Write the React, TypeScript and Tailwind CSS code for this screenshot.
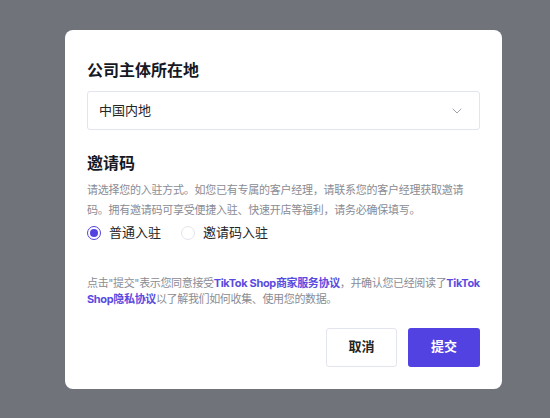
import { ChevronDown } from 'lucide-react'
import { useState } from 'react'

const font = { fontFamily: 'Inter, "Noto Sans CJK SC", "Noto Sans", sans-serif' }

export default function App() {
  const [mode, setMode] = useState<'normal' | 'invite'>('normal')

  return (
    <div className="h-[418px] w-[550px] overflow-hidden bg-[#70737a] pl-[65px] pt-[30px]" style={font}>
      <div className="w-[437px] rounded-lg bg-white px-[22px] pb-[22px] pt-[27px]">
        <h2 className="text-[16px] font-bold leading-[26px] text-[#161823]">公司主体所在地</h2>
        <button className="mt-[8px] flex h-[39px] w-full items-center justify-between rounded-[3px] border border-[#e3e5ee] pl-[11px] pr-[14px] text-[13px] text-[#252525]">
          <span>中国内地</span>
          <ChevronDown className="h-4 w-4 text-[#a2a4ad]" strokeWidth={1.5} />
        </button>

        <h2 className="mt-[20px] text-[16px] font-bold leading-[26px] text-[#161823]">邀请码</h2>
        <p className="mt-[4px] text-[11px] leading-[20px] tracking-[-0.25px] text-[#8a8c94]">
          请选择您的入驻方式。如您已有专属的客户经理，请联系您的客户经理获取邀请码。拥有邀请码可享受便捷入驻、快速开店等福利，请务必确保填写。
        </p>
        <div className="mt-[3px] flex items-center gap-[20px] text-[13px] text-[#252525]">
          <label className="flex cursor-pointer items-center gap-[8px]" onClick={() => setMode('normal')}>
            <span
              className={
                mode === 'normal'
                  ? 'flex h-[14px] w-[14px] items-center justify-center rounded-full border border-[#5242e1]'
                  : 'flex h-[14px] w-[14px] items-center justify-center rounded-full border border-[#e3e5ee]'
              }
            >
              {mode === 'normal' && <span className="h-[8px] w-[8px] rounded-full bg-[#5242e1]" />}
            </span>
            普通入驻
          </label>
          <label className="flex cursor-pointer items-center gap-[8px]" onClick={() => setMode('invite')}>
            <span
              className={
                mode === 'invite'
                  ? 'flex h-[14px] w-[14px] items-center justify-center rounded-full border border-[#5242e1]'
                  : 'flex h-[14px] w-[14px] items-center justify-center rounded-full border border-[#e3e5ee]'
              }
            >
              {mode === 'invite' && <span className="h-[8px] w-[8px] rounded-full bg-[#5242e1]" />}
            </span>
            邀请码入驻
          </label>
        </div>

        <p className="mt-[32px] text-[11px] leading-[16px] tracking-[-0.35px] text-[#8a8c94]">
          点击"提交"表示您同意接受
          <span className="font-bold text-[#5a4be0]">TikTok Shop商家服务协议</span>
          ，并确认您已经阅读了
          <span className="font-bold text-[#5a4be0]">TikTok Shop隐私协议</span>
          以了解我们如何收集、使用您的数据。
        </p>

        <div className="mt-[21px] flex justify-end gap-[11px]">
          <button className="h-[39px] w-[71px] rounded-[3px] border border-[#e3e5ee] bg-white text-[13px] font-bold text-[#252525]">
            取消
          </button>
          <button className="h-[39px] w-[72px] rounded-[3px] bg-[#5242e1] text-[13px] font-bold text-white">
            提交
          </button>
        </div>
      </div>
    </div>
  )
}
